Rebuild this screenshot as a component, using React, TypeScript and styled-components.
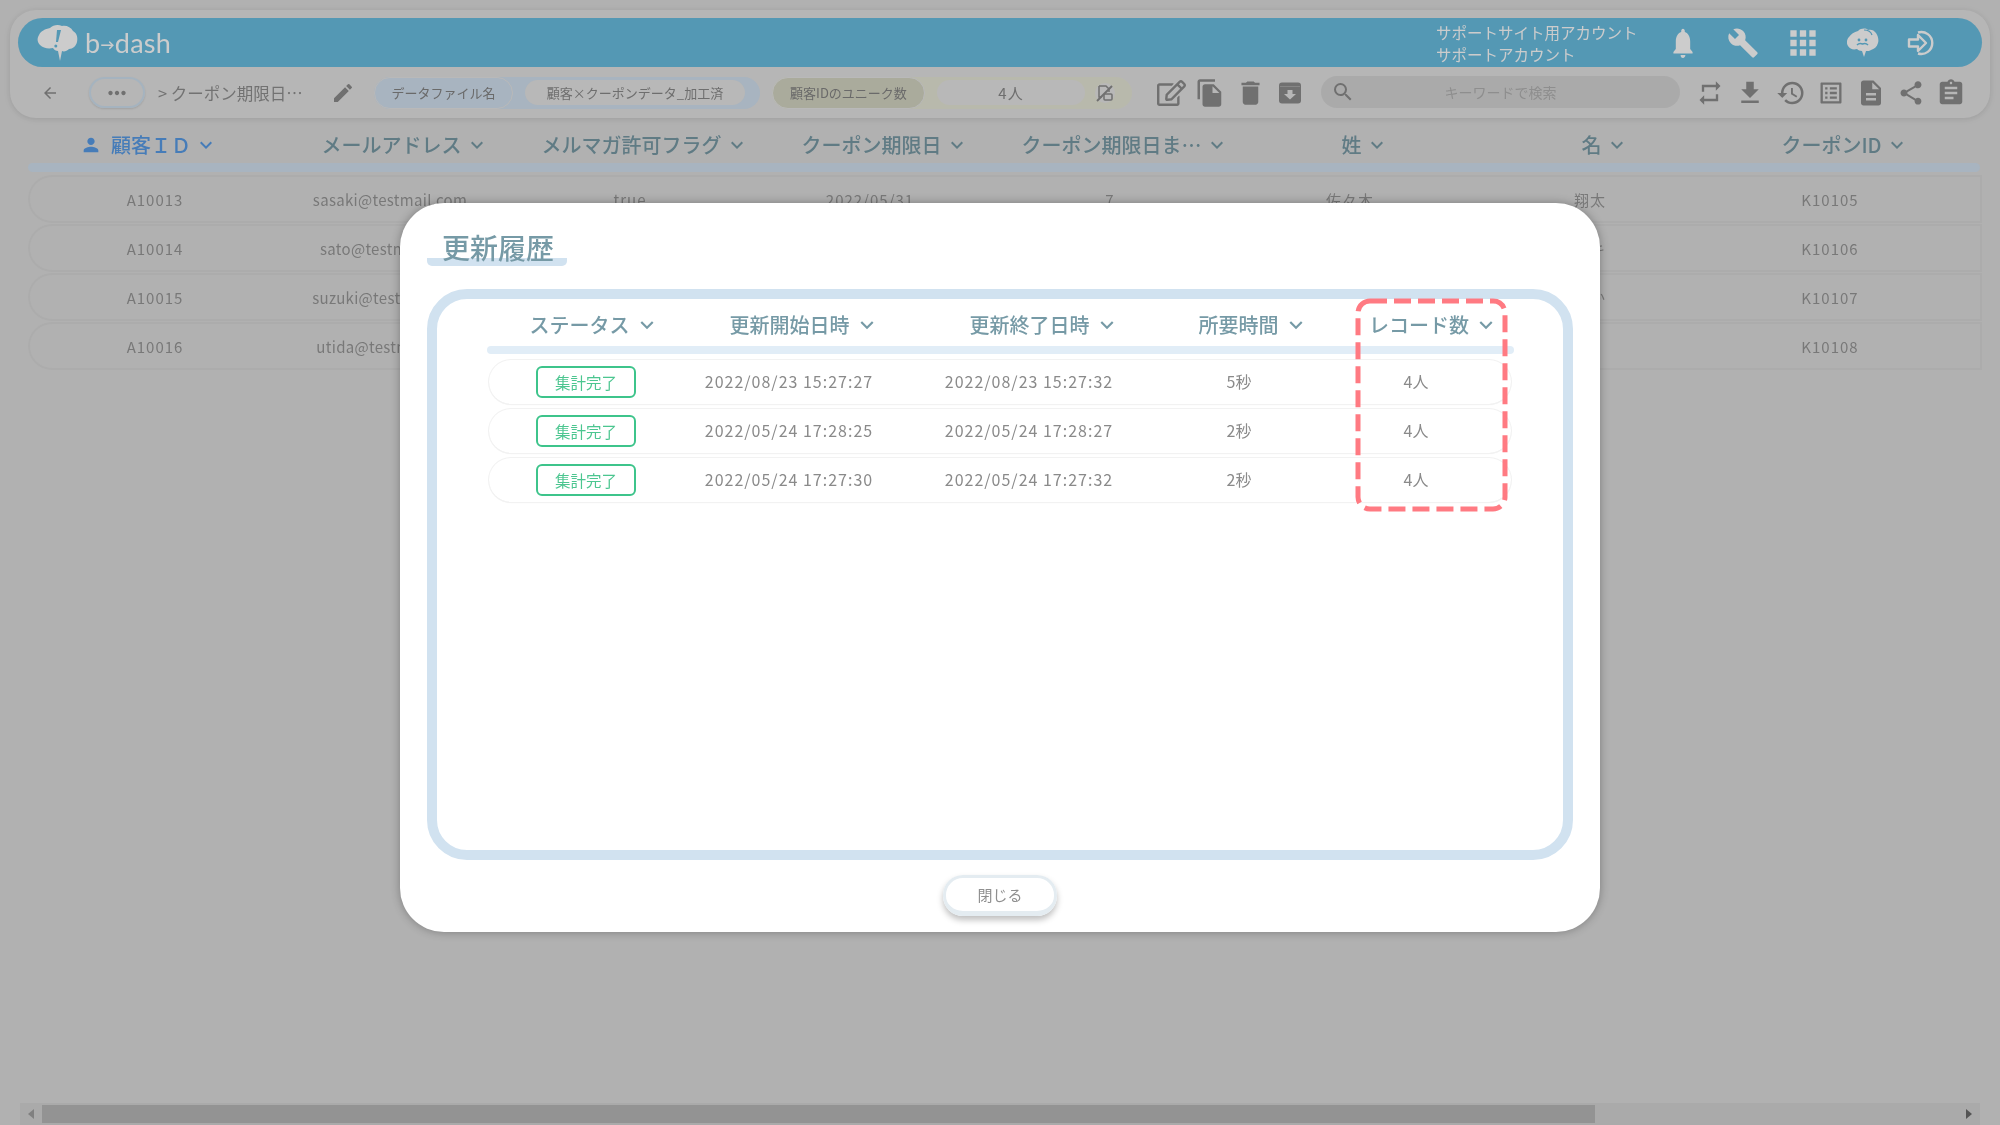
import { FC } from "react";
import styled, { createGlobalStyle } from "styled-components";
import {
  MdNotifications,
  MdBuild,
  MdApps,
  MdPerson,
  MdKeyboardArrowDown,
  MdArrowBack,
  MdEdit,
  MdFileCopy,
  MdDelete,
  MdRepeat,
  MdFileDownload,
  MdHistory,
  MdDescription,
  MdShare,
  MdAssignment,
  MdSearch,
  MdMoreHoriz,
  MdOutlineListAlt,
} from "react-icons/md";
import { FaRegEdit } from "react-icons/fa";

const FONT = `"Noto Sans CJK JP", "Noto Sans", sans-serif`;

const GlobalStyle = createGlobalStyle`
  html, body {
    margin: 0;
    padding: 0;
    width: 2000px;
    height: 1125px;
    overflow: hidden;
    background: #dedede;
    font-family: ${FONT};
  }
  #root { filter: blur(0.35px); }
  * { box-sizing: border-box; }
`;

interface Column {
  label: string;
  active?: boolean;
}

const columns: Column[] = [
  { label: "顧客ＩＤ", active: true },
  { label: "メールアドレス" },
  { label: "メルマガ許可フラグ" },
  { label: "クーポン期限日" },
  { label: "クーポン期限日ま…" },
  { label: "姓" },
  { label: "名" },
  { label: "クーポンID" },
];

const customers = [
  ["A10013", "sasaki@testmail.com", "true", "2022/05/31", "7", "佐々木", "翔太", "K10105"],
  ["A10014", "sato@testmail.com", "true", "2022/05/31", "7", "佐藤", "ミキ", "K10106"],
  ["A10015", "suzuki@testmail.com", "true", "2022/05/31", "7", "鈴木", "ゆか", "K10107"],
  ["A10016", "utida@testmail.com", "true", "2022/05/31", "7", "内田", "", "K10108"],
];

const historyRows = [
  { start: "2022/08/23 15:27:27", end: "2022/08/23 15:27:32", took: "5秒", count: "4人" },
  { start: "2022/05/24 17:28:25", end: "2022/05/24 17:28:27", took: "2秒", count: "4人" },
  { start: "2022/05/24 17:27:30", end: "2022/05/24 17:27:32", took: "2秒", count: "4人" },
];

const historyHeads = [
  { label: "ステータス", shift: 23 },
  { label: "更新開始日時", shift: 35 },
  { label: "更新終了日時", shift: 35 },
  { label: "所要時間", shift: 33 },
  { label: "レコード数", shift: 40 },
];

const BrainLogo: FC = () => (
  <svg width="42" height="38" viewBox="0 0 42 38" fill="#fff">
    <path d="M13 4c3-3 8-4 12-2 4-1 9 1 11 5 4 2 5 7 4 11-1 4-4 7-8 7-2 2-5 3-7 2l-2 10-2-10c-2 0-4-1-5-3-5 1-10 0-13-3-3-3-3-7-1-10 2-4 6-6 11-7z" />
    <path d="M24 6l-3 12h-2l1-12z" fill="#69bee2" />
    <circle cx="18.800" cy="22" r="1.500" fill="#69bee2" />
  </svg>
);

const SmallBrain: FC = () => (
  <svg width="32" height="30" viewBox="0 0 32 30" fill="#fff">
    <path d="M11 3c3-3 8-3 10-1 3-1 6 0 8 3 2 3 3 7 2 10-1 4-4 6-7 7-1 1-3 1-5 1l-2 6-2-6c-2 0-4-1-5-2-4 1-7 0-9-3-2-3-1-7 1-9 2-3 5-5 9-6z" />
    <circle cx="12" cy="12" r="1.400" fill="#69bee2" />
    <circle cx="19" cy="12" r="1.400" fill="#69bee2" />
    <path d="M10 17c2-2 3-2 5.500-1 2.500-1 3.500-1 5.500 1" fill="none" stroke="#69bee2" strokeWidth="1.600" />
    <path d="M17 2c4 0 7 2 8 5" fill="none" stroke="#69bee2" strokeWidth="1.200" />
  </svg>
);

const LoginIcon: FC = () => (
  <svg width="32" height="28" viewBox="0 0 32 28" fill="none" stroke="#fff" strokeWidth="2.400">
    <path d="M11 3.500a11 11 0 1 1 0 21" />
    <path d="M2 10.500h9v-4.500l8 8-8 8v-4.500h-9z" strokeLinejoin="round" />
  </svg>
);

const NoCountIcon: FC = () => (
  <svg width="20" height="20" viewBox="0 0 20 20" fill="none" stroke="#8c8c8c" strokeWidth="1.500">
    <path d="M4 3h7l3 3v3" />
    <path d="M4 3v11h3" />
    <rect x="9" y="11" width="8" height="6" rx="1" />
    <path d="M2 18 17 3" strokeWidth="2" />
  </svg>
);

const ArchiveIcon: FC = () => (
  <svg width="22" height="22" viewBox="0 0 22 22">
    <rect x="0" y="0.500" width="22" height="21" rx="3" fill="#8c8c8c" />
    <path d="M1 4.500h20" stroke="#a8a8a8" strokeWidth="1" />
    <path d="M8.500 8h5v4h3.500l-6 5.500-6-5.500h3.500z" fill="#e4e4e4" />
  </svg>
);

const App: FC = () => (
  <>
    <GlobalStyle />
    <Page>
      <HeaderCard>
        <BlueBar>
          <LogoWrap>
            <BrainLogo />
            <LogoText>
              b<LogoArrow>→</LogoArrow>dash
            </LogoText>
          </LogoWrap>
          <Account>
            <span>サポートサイト用アカウント</span>
            <span>サポートアカウント</span>
          </Account>
          <TopIcons>
            <TopIcon><BellIcon size={36} /></TopIcon>
            <TopIcon><MdBuild size={32} /></TopIcon>
            <TopIcon><MdApps size={38} /></TopIcon>
            <TopIcon><SmallBrain /></TopIcon>
            <TopIcon><LoginIcon /></TopIcon>
          </TopIcons>
        </BlueBar>
        <Toolbar>
          <BackIcon><MdArrowBack size={18} /></BackIcon>
          <DotsPill><MdMoreHoriz size={26} /></DotsPill>
          <Crumb>&gt; クーポン期限日…</Crumb>
          <PencilIcon><MdEdit size={24} /></PencilIcon>
          <InfoGroup $width={386} $bg="#d2e1f0">
            <InfoLabel $width={139} $bg="#d2e1f0">データファイル名</InfoLabel>
            <InfoValue $width={220} $left={12}>顧客×クーポンデータ_加工済</InfoValue>
          </InfoGroup>
          <InfoGroup $width={360} $bg="#e7e8d8" $gap>
            <InfoLabel $width={153} $bg="#d5d6c3">顧客IDのユニーク数</InfoLabel>
            <InfoValue $width={148} $left={12} $big>4人</InfoValue>
            <CountIcon><NoCountIcon /></CountIcon>
          </InfoGroup>
          <ActionIcon $x={1157}><FaRegEdit size={29} /></ActionIcon>
          <ActionIcon $x={1195}><MdFileCopy size={30} /></ActionIcon>
          <ActionIcon $x={1235}><MdDelete size={31} /></ActionIcon>
          <ActionIcon $x={1279}><ArchiveIcon /></ActionIcon>
          <SearchBox>
            <MdSearch size={24} />
            <SearchText>キーワードで検索</SearchText>
          </SearchBox>
          <RightIcons>
            <MdRepeat size={28} />
            <MdFileDownload size={30} />
            <MdHistory size={30} />
            <MdOutlineListAlt size={28} />
            <MdDescription size={30} />
            <MdShare size={28} />
            <MdAssignment size={30} />
          </RightIcons>
        </Toolbar>
      </HeaderCard>

      <TableHead>
        {columns.map((c) => (
          <HeadCell key={c.label} $active={c.active}>
            {c.active && <PersonIcon size={22} />}
            <span>{c.label}</span>
            <MdKeyboardArrowDown size={24} />
          </HeadCell>
        ))}
      </TableHead>
      <HeadRule />
      {customers.map((row) => (
        <CustomerRow key={row[0]}>
          {row.map((v, i) => (
            <CustomerCell key={i} $wide={i !== 1}>{v}</CustomerCell>
          ))}
        </CustomerRow>
      ))}

      <ScrollTrack>
        <ScrollArrow $side="left" />
        <ScrollThumb />
        <ScrollArrow $side="right" />
      </ScrollTrack>
    </Page>

    <Overlay>
      <Modal>
        <ModalBody>
          <TitleWrap>更新履歴</TitleWrap>
          <Frame>
            <HistoryGrid>
              {historyHeads.map((h) => (
                <HistoryHead key={h.label} $shift={h.shift}>
                  {h.label}
                  <MdKeyboardArrowDown size={26} />
                </HistoryHead>
              ))}
            </HistoryGrid>
            <HistoryRule />
            {historyRows.map((r) => (
              <HistoryRow key={r.start}>
                <HistoryCell><Badge>集計完了</Badge></HistoryCell>
                <HistoryCell $wide>{r.start}</HistoryCell>
                <HistoryCell $wide>{r.end}</HistoryCell>
                <HistoryCell>{r.took}</HistoryCell>
                <HistoryCell>{r.count}</HistoryCell>
              </HistoryRow>
            ))}
            <Marker width="153" height="214" viewBox="0 0 153 214">
              <rect
                x="3"
                y="3"
                width="147"
                height="208"
                rx="12"
                fill="none"
                stroke="#ff7a82"
                strokeWidth="5"
                strokeDasharray="17 7"
              />
            </Marker>
          </Frame>
        </ModalBody>
        <ModalFooter>
          <CloseButton>閉じる</CloseButton>
        </ModalFooter>
      </Modal>
    </Overlay>
  </>
);

export default App;

const Page = styled.div`
  position: relative;
  width: 2000px;
  height: 1125px;
  padding-top: 10px;
  background: #dedede;
  overflow: hidden;
`;

const HeaderCard = styled.div`
  margin: 0 10px;
  height: 108px;
  padding: 8px;
  border-radius: 26px;
  background: #e4e4e4;
  box-shadow: 0 1px 6px rgba(0, 0, 0, 0.12);
`;

const BlueBar = styled.div`
  display: flex;
  align-items: center;
  height: 49px;
  padding: 0 29px 0 19px;
  border-radius: 25px;
  background: #69bee2;
`;

const LogoWrap = styled.div`
  display: flex;
  align-items: center;
  gap: 6px;
`;

const LogoText = styled.div`
  font-family: "Lato", sans-serif;
  font-size: 27px;
  line-height: 1;
  color: #fff;
  letter-spacing: 0.3px;
`;

const LogoArrow = styled.span`
  font-size: 14px;
  font-weight: 700;
  vertical-align: 3px;
`;

const Account = styled.div`
  display: flex;
  flex-direction: column;
  margin-left: auto;
  width: 217px;
  font-size: 15.500px;
  line-height: 22px;
  color: #fff;
  white-space: nowrap;
`;

const TopIcons = styled.div`
  display: flex;
  align-items: center;
`;

const TopIcon = styled.div`
  display: flex;
  align-items: center;
  justify-content: center;
  width: 60px;
  color: #fff;
`;

const BellIcon = styled(MdNotifications)`
  transform: scaleX(0.8);
`;

const PersonIcon = styled(MdPerson)`
  margin-right: 6px;
`;

const Toolbar = styled.div`
  position: relative;
  display: flex;
  align-items: center;
  height: 51px;
  color: #8c8c8c;
`;

const BackIcon = styled.div`
  display: flex;
  margin-left: 23px;
  width: 48px;
`;

const DotsPill = styled.div`
  display: flex;
  align-items: center;
  justify-content: center;
  width: 56px;
  height: 31px;
  border-radius: 16px;
  border: 2px solid #cfe0ef;
  box-shadow: 0 1px 2px rgba(0, 0, 0, 0.12);
`;

const Crumb = styled.div`
  margin-left: 13px;
  width: 173px;
  font-size: 16.500px;
  color: #8f8f8f;
  white-space: nowrap;
`;

const PencilIcon = styled.div`
  display: flex;
  width: 43px;
`;

const InfoGroup = styled.div<{ $width: number; $bg: string; $gap?: boolean }>`
  position: relative;
  display: flex;
  align-items: center;
  flex: none;
  width: ${(p) => p.$width}px;
  height: 32px;
  margin-left: ${(p) => (p.$gap ? 12 : 0)}px;
  border-radius: 16px;
  background: ${(p) => p.$bg};
`;

const InfoLabel = styled.div<{ $width: number; $bg: string }>`
  display: flex;
  align-items: center;
  justify-content: center;
  width: ${(p) => p.$width}px;
  height: 32px;
  border-radius: 16px;
  border: 1px solid #e8e8e8;
  background: ${(p) => p.$bg};
  font-size: 13px;
  color: #858585;
  white-space: nowrap;
`;

const InfoValue = styled.div<{ $width: number; $left: number; $big?: boolean }>`
  display: flex;
  align-items: center;
  justify-content: center;
  width: ${(p) => p.$width}px;
  height: 25px;
  margin-left: ${(p) => p.$left}px;
  border-radius: 13px;
  background: #e6e6e6;
  font-size: ${(p) => (p.$big ? 15 : 13)}px;
  letter-spacing: ${(p) => (p.$big ? 1 : 0)}px;
  color: #8a8a8a;
  white-space: nowrap;
`;

const CountIcon = styled.div`
  display: flex;
  margin-left: 10px;
  border-radius: 50%;
  background: #e6e6e6;
`;

const ActionIcon = styled.div<{ $x: number }>`
  position: absolute;
  top: 50%;
  left: ${(p) => p.$x - 18}px;
  display: flex;
  transform: translateY(-50%);
`;

const SearchBox = styled.div`
  position: absolute;
  top: 9px;
  left: 1303px;
  display: flex;
  align-items: center;
  width: 359px;
  height: 32px;
  padding-left: 10px;
  border-radius: 16px;
  background: #d5d5d5;
`;

const SearchText = styled.span`
  flex: 1;
  padding-right: 34px;
  text-align: center;
  font-size: 14px;
  color: #b2b2b2;
`;

const RightIcons = styled.div`
  position: absolute;
  top: 0;
  left: 1678px;
  display: flex;
  align-items: center;
  justify-content: space-between;
  width: 270px;
  height: 51px;
`;

const TableHead = styled.div`
  display: grid;
  grid-template-columns: repeat(8, 240px);
  margin: 8px 0 0 35px;
  height: 37px;
`;

const HeadCell = styled.div<{ $active?: boolean }>`
  display: flex;
  align-items: center;
  justify-content: center;
  gap: 3px;
  font-size: 20px;
  font-weight: 500;
  padding-left: ${(p) => (p.$active ? 0 : 20)}px;
  padding-right: ${(p) => (p.$active ? 12 : 0)}px;
  color: ${(p) => (p.$active ? "#589ce7" : "#789aa6")};
  white-space: nowrap;
`;

const HeadRule = styled.div`
  margin: 0 20px 0 28px;
  height: 9px;
  border-radius: 5px;
  background: #d2e1f0;
`;

const CustomerRow = styled.div`
  display: grid;
  grid-template-columns: 230px repeat(7, 240px);
  align-items: center;
  margin: 5px 20px 0 30px;
  padding-left: 10px;
  height: 44px;
  border-radius: 22px 0 0 22px;
  box-shadow: 0 0 0 2px #d8d8d8;
`;

const CustomerCell = styled.div<{ $wide?: boolean }>`
  text-align: center;
  font-size: 15px;
  letter-spacing: ${(p) => (p.$wide ? 1 : 0.3)}px;
  color: #979797;
  white-space: nowrap;
`;

const ScrollTrack = styled.div`
  position: absolute;
  left: 20px;
  bottom: 0;
  width: 1960px;
  height: 22px;
  background: #d5d5d5;
`;

const ScrollThumb = styled.div`
  position: absolute;
  top: 2px;
  left: 22px;
  width: 1553px;
  height: 18px;
  background: #b8b8b8;
`;

const ScrollArrow = styled.div<{ $side: "left" | "right" }>`
  position: absolute;
  top: 6px;
  ${(p) => (p.$side === "left" ? "left: 8px;" : "right: 8px;")}
  border-top: 5px solid transparent;
  border-bottom: 5px solid transparent;
  ${(p) =>
    p.$side === "left"
      ? "border-right: 6px solid #a0a0a0;"
      : "border-left: 6px solid #6a6a6a;"}
`;

const Overlay = styled.div`
  position: fixed;
  top: 0;
  left: 0;
  display: flex;
  justify-content: center;
  align-items: flex-start;
  width: 2000px;
  height: 1125px;
  padding-top: 203px;
  background: rgba(0, 0, 0, 0.2);
`;

const Modal = styled.div`
  display: flex;
  flex-direction: column;
  width: 1200px;
  height: 729px;
  border-radius: 44px;
  background: #fff;
  box-shadow: 0 0 10px rgba(0, 0, 0, 0.3);
`;

const ModalBody = styled.div`
  flex: 1;
  padding: 30px 27px 0;
`;

const TitleWrap = styled.div`
  width: 140px;
  height: 33px;
  padding-left: 15px;
  border-bottom: 8px solid #d1e2f0;
  border-radius: 0 0 5px 5px;
  font-size: 28px;
  font-weight: 500;
  line-height: 28px;
  color: #769aa6;
  white-space: nowrap;
`;

const Frame = styled.div`
  position: relative;
  height: 571px;
  margin-top: 23px;
  padding: 0 50px;
  border: 10px solid #d1e2f0;
  border-radius: 40px;
`;

const HistoryGrid = styled.div`
  display: grid;
  grid-template-columns: 192px 216px 264px 156px 198px;
  height: 47px;
  padding-top: 4px;
`;

const HistoryHead = styled.div<{ $shift: number }>`
  display: flex;
  align-items: center;
  justify-content: center;
  gap: 4px;
  padding-left: ${(p) => p.$shift}px;
  font-size: 20px;
  font-weight: 500;
  color: #769aa6;
  white-space: nowrap;
`;

const HistoryRule = styled.div`
  height: 8px;
  margin-bottom: 6px;
  margin-right: -1px;
  border-radius: 4px;
  background: #e1edf7;
`;

const HistoryRow = styled.div`
  display: grid;
  grid-template-columns: 192px 216px 264px 156px 198px;
  align-items: center;
  width: 1022px;
  margin: 0 0 5px 2px;
  height: 44px;
  border-radius: 22px;
  box-shadow: 0 0 0 1px #f2f2f2, 0 1px 1px #ececec;
`;

const HistoryCell = styled.div<{ $wide?: boolean }>`
  display: flex;
  justify-content: center;
  padding-bottom: 2px;
  font-size: 16px;
  letter-spacing: ${(p) => (p.$wide ? 1 : 0)}px;
  color: #8a8a8a;
  white-space: nowrap;
`;

const Badge = styled.div`
  display: flex;
  align-items: center;
  justify-content: center;
  width: 100px;
  height: 32px;
  margin: 2px 0 0 2px;
  border: 2.500px solid #3dc48b;
  border-radius: 6px;
  font-size: 15.500px;
  color: #4cc690;
`;

const Marker = styled.svg`
  position: absolute;
  top: -1px;
  left: 918px;
`;

const ModalFooter = styled.div`
  display: flex;
  justify-content: center;
  height: 60px;
  padding-top: 3px;
`;

const CloseButton = styled.div`
  display: flex;
  align-items: center;
  justify-content: center;
  width: 114px;
  height: 41px;
  border-radius: 20px;
  border: 3px solid #e4ecf1;
  border-bottom-width: 5px;
  box-shadow: 0 4px 6px rgba(0, 0, 0, 0.25);
  font-size: 15px;
  color: #8f8f8f;
`;
